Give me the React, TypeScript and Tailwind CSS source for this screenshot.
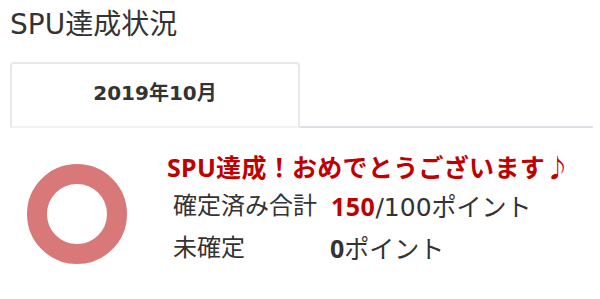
import React from 'react';

const font = '"DejaVu Sans", "Noto Sans CJK JP", sans-serif';
const boldFont = '"Noto Sans", "Noto Sans CJK JP", sans-serif';

function Donut() {
  return (
    <svg width="100" height="100" viewBox="0 0 100 100">
      <circle cx="50" cy="50" r="40" fill="none" stroke="#d97878" strokeWidth="20" />
    </svg>
  );
}

export default function App() {
  return (
    <div className="w-[600px] h-[299px] bg-white text-[#333]" style={{ fontFamily: font }}>
      {/* Title */}
      <h1 className="pt-[8px] pl-[10px] text-[28px] leading-[34px] font-normal">SPU達成状況</h1>

      {/* Tabs */}
      <div className="flex mt-[20px] ml-[10px] mr-[7px]">
        <div className="w-[290px] h-[66px] pb-[4px] border-2 border-[#e8e8e8] border-b-[#f2f2f2] rounded-t-[4px] flex items-center justify-center">
          <span className="text-[20px] font-bold leading-none">2019年10月</span>
        </div>
        <div className="flex-1 border-b-2 border-[#dde1e6]" />
      </div>

      {/* Summary */}
      <div className="flex">
        <div className="pl-[27px] pt-[36px]">
          <Donut />
        </div>
        <div className="pl-[40px] pt-[19px]">
          <p
            className="text-[25px] leading-[40px] font-bold text-[#bf0000] tracking-[0.3px]"
            style={{ fontFamily: boldFont }}
          >
            SPU達成！おめでとうございます♪
          </p>
          <div className="pl-[6px] text-[24px] leading-[40px] -mt-[1px]">
            <div className="flex">
              <span className="w-[158px]">確定済み合計</span>
              <span className="text-[25px]">
                <b className="text-[#bf0000] tracking-[0.5px]" style={{ fontFamily: boldFont }}>
                  150
                </b>
                /100ポイント
              </span>
            </div>
            <div className="flex">
              <span className="w-[157px]">未確定</span>
              <span className="text-[25px]">
                <b style={{ fontFamily: boldFont }}>0</b>ポイント
              </span>
            </div>
          </div>
        </div>
      </div>
    </div>
  );
}
